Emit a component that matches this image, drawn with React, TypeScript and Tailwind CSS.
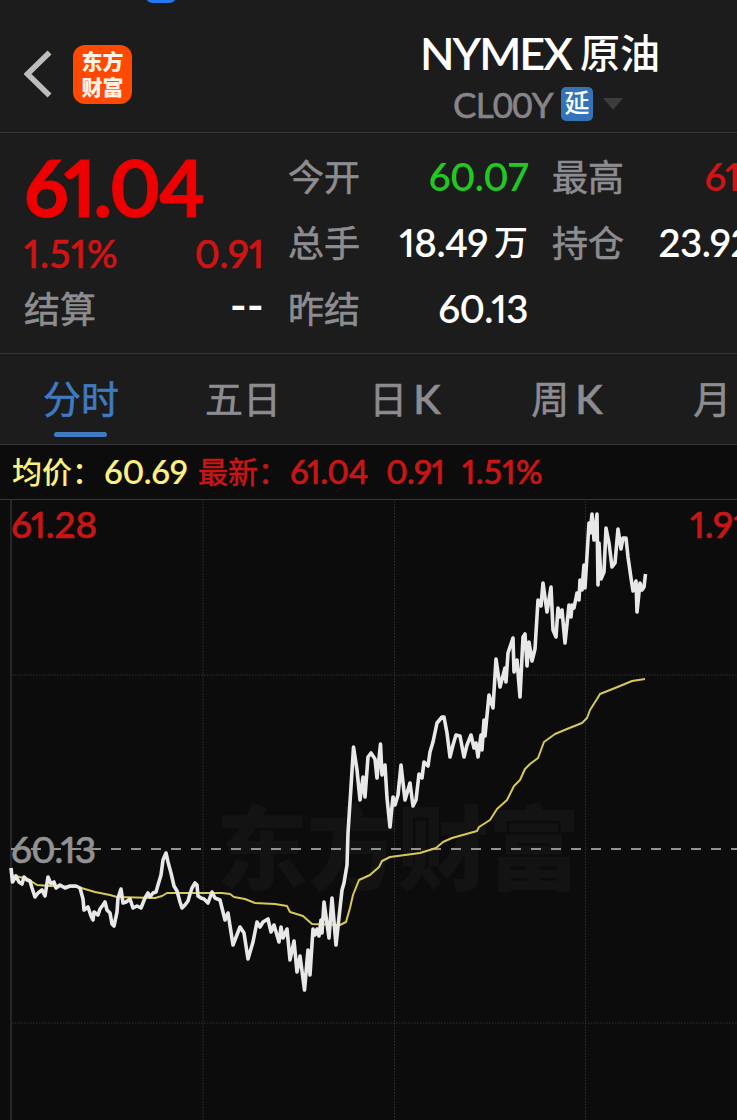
import { clsx } from 'clsx';

type Stat = {
  label: string;
  value: string;
  unit?: string;
  color: string;
};

const stats: Stat[][] = [
  [
    { label: '今开', value: '60.07', color: 'text-[#22c722]' },
    { label: '总手', value: '18.49', unit: '万', color: 'text-white' },
    { label: '昨结', value: '60.13', color: 'text-white' },
  ],
  [
    { label: '最高', value: '61.28', color: 'text-[#d01414]' },
    { label: '持仓', value: '23.92', unit: '万', color: 'text-white' },
  ],
];

const tabs = [
  { han: '分时', active: true },
  { han: '五日' },
  { han: '日', latin: 'K' },
  { han: '周', latin: 'K' },
  { han: '月', latin: 'K' },
];

const pricePoints =
  '11,868 12.5,882 16,876 19,882 22,884 24,877 27,880 30,881 32,888 35,897 38,893 42,890 45,896 48,877 51,884 54,882 56,888 60,885 65,888 70,886 76,886 80,888 83,899 84,910 88,907 91,916 93,920 94,912 98,915 100,909 103,905 105,902 107,910 110,913 112,924 114,926 117,912 118,898 121,889 123,903 126,902 130,899 133,908 137,906 141,908 145,898 148,893 150,897 153,893 156,892 158,885 161,875 163,860 166,853 168,862 171,873 174,886 177,891 180,902 182,908 185,905 188,901 190,894 192,888 195,883 197,885 198,896 201,898 204,899 208,903 212,892 215,898 220,900 225,920 228,913 233,945 240,927 244,933 248,959 253,942 257,922 260,927 263,922 268,919 271,932 274,925 279,942 281,927 283,938 287,929 290,960 294,941 297,972 300,956 304.5,990 308,950 310,975 313,929 315,935 317,929 319,936 321,920 322,933 324,902 329,938 332,898 336,945 342,890 344,883 347,865 348,833 351,787 353.5,747 357,770 360,800 363,777 365,797 368,757 371,753 375,759 377,778 380.5,744 382,775 385,765 387,798 390,827 393,797 395,805 398,795 401,765 405,800 410,783 413,806 416,800 419,774 422,778 424,762 428,766 430,752 433,742 437,723 442,717 444,717 447,733 450,757 453,745 456,735 460,736 464,757 467,745 471,735 474,748 476,743 478,757 481,735 482,750 484,720 485,736 489,695 493,708 496,659 500,687 505,668 506,682 508,653 513,638 514,672 517,660 520,697 523,637 525,634 527,666 529,642 532,661 535,649 538,600 541,606 543,583 547,612 551,587 553,630 556,637 558,608 560,617 562,610 565,643 569,605 571,617 572,605 574,608 577,593 579,600 580,580 582,590 584,565 585,588 589,523 590,533 592,514 594,540 597,514 598,585 599,543 601,579 604,572 606,528 609,543 612,567 615,563 618,529 621,549 623,538 626,538 628,557 631,578 633,591 636,581 637,612 640,583 642,590 644,587 645.5,574';

const averagePoints =
  '11,875 28,879 37,885 50,886 78,887 95,892 110,895 117,897 155,898 162,896 167,893 200,893 222,893 230,894 234,897 245,899 255,903 275,904 287,906 290,912 303,916 312,924 340,925 346,922 350,908 353,895 359,880 370,875 379,867 382,861 390,857 420,853 436,848 443,842 452,838 477,831 479,827 490,820 497,809 507,800 514,786 520,780 525,769 530,764 538,758 544,742 555,734 567,729 582,723 587,718 590,710 597,699 600,694 620,686 632,681 645,679';

const num = "font-['Lato',sans-serif]";
const han = "font-['Noto_Sans_CJK_SC',sans-serif]";
// the regular cuts are a little thin on the dark panels
const firm = '[-webkit-text-stroke:0.6px_currentColor]';

function Header() {
  return (
    <header className="relative h-[133px] border-b border-[#363636]">
      <div className="absolute -top-5 left-[145px] h-[23px] w-8 rounded-lg bg-[#2878ef]" />
      <div className="absolute left-6 top-11 flex items-center gap-[21px]">
        <svg width="28" height="60" viewBox="0 0 28 60" fill="none">
          <path d="M25.500 8.500 3.500 30l22 21.500" stroke="#bdbdbd" strokeWidth="5.500" />
        </svg>
        <div className={clsx(han, 'flex size-[59px] flex-col items-center justify-center rounded-xl bg-[#ff4800] pb-[3px] text-[21px] font-black leading-[26px] text-[#fff3e8]')}>
          <span>东方</span>
          <span>财富</span>
        </div>
      </div>
      <div className="flex flex-col items-center pt-7">
        <h1 className="flex items-center gap-[9px] leading-[50px] text-white">
          <span className={clsx(num, 'text-[45px] font-semibold tracking-[-2px]')}>NYMEX</span>
          <span className={clsx(han, 'pb-1 text-[40px] font-medium leading-[46px]')}>原油</span>
        </h1>
        <div className="mr-1 flex h-[52px] items-center">
          <span className={clsx(num, firm, 'text-[35px] tracking-[-0.8px] text-[#85858a]')}>CL00Y</span>
          <span className={clsx(han, 'ml-2 flex h-[34px] w-8 items-center justify-center rounded-[5px] bg-[#3573b9] pb-1 text-[25px] font-medium text-white')}>
            延
          </span>
          <svg className="ml-[10px]" width="20" height="14" viewBox="0 0 20 14">
            <path d="M0 1h20L10 13z" fill="#3c3c3c" />
          </svg>
        </div>
      </div>
    </header>
  );
}

function StatRow({ label, value, unit, color }: Stat) {
  return (
    <div className="flex h-[66px] items-center justify-between">
      <span className={clsx(han, firm, 'pb-[5px] text-[36px] text-[#8c8c91]')}>{label}</span>
      <span className={clsx('flex items-center font-semibold', color)}>
        <span className={clsx(num, 'text-[38.500px] tracking-[-0.5px] proportional-nums')}>{value}</span>
        {unit && <span className={clsx(han, 'ml-1.5 pb-[5px] text-[34px] font-medium')}>{unit}</span>}
      </span>
    </div>
  );
}

function Quote() {
  return (
    <section className="grid h-[221px] grid-cols-[repeat(4,240px)] gap-6 border-b border-[#363636] px-6 pt-[11px]">
      <div>
        <div className={clsx(num, 'flex h-[86px] items-center text-[78px] font-bold tracking-[-2.500px] text-[#ee0000] [-webkit-text-stroke:1px_currentColor] proportional-nums')}>
          61.04
        </div>
        <div className={clsx(num, firm, 'flex h-[46px] items-center justify-between text-[38px] font-medium text-[#d01414] proportional-nums')}>
          <span className="tracking-[0.8px]">1.51%</span>
          <span>0.91</span>
        </div>
        <div className="flex h-[66px] items-center justify-between">
          <span className={clsx(han, firm, 'pb-[5px] text-[36px] text-[#8c8c91]')}>结算</span>
          <span className={clsx(num, 'pb-2.5 text-[46px] font-semibold text-white')}>--</span>
        </div>
      </div>
      {stats.map((column, i) => (
        <div key={i}>
          {column.map((stat) => (
            <StatRow key={stat.label} {...stat} />
          ))}
        </div>
      ))}
    </section>
  );
}

function Tabs() {
  return (
    <nav className="flex h-[91px] border-b border-[#363636]">
      {tabs.map(({ han: text, latin, active }) => (
        <div
          key={text}
          className={clsx('flex w-[162px] shrink-0 flex-col items-center pt-[18px]', active ? 'text-[#3e7bc0]' : 'text-[#8c8c91]')}
        >
          <span className="flex h-14 items-center gap-1.5">
            <span className={clsx(han, firm, 'pb-[7px] text-[38px]')}>{text}</span>
            {latin && <span className={clsx(num, firm, 'pb-0.5 text-[41px] font-medium')}>{latin}</span>}
          </span>
          {active && <span className="mr-0.5 mt-1 h-[5px] w-[53px] rounded-full bg-[#3e7bc0]" />}
        </div>
      ))}
    </nav>
  );
}

function Legend() {
  return (
    <div className="flex h-[55px] items-center border-b border-[#363636] bg-[#0c0c0c] pl-3">
      <span className={clsx(han, 'w-[92px] whitespace-nowrap pb-1 text-[30px] font-medium text-[#fcf080]')}>均价：</span>
      <span className={clsx(num, 'w-[94px] text-[33px] font-semibold tracking-[-0.3px] text-[#fcf080] proportional-nums')}>60.69</span>
      <span className={clsx(han, firm, 'w-[92px] whitespace-nowrap pb-1 text-[30px] text-[#c81616]')}>最新：</span>
      <span className={clsx(num, firm, 'flex text-[33px] font-medium text-[#c81616] proportional-nums')}>
        <span className="w-[96px] tracking-[-0.4px]">61.04</span>
        <span className="w-[76px] tracking-[-0.5px]">0.91</span>
        <span className="tracking-[0.5px]">1.51%</span>
      </span>
    </div>
  );
}

function Chart() {
  return (
    <section className="relative h-[620px] w-[737px] bg-[#0c0c0c]">
      <svg className="block" width="737" height="620" viewBox="0 500 737 620" fill="none">
        <text x="216" y="883" textLength="364" className={clsx(han, 'text-[92px] font-black')} fill="#131313">
          东方财富
        </text>
        <path d="M11 500V1120" stroke="#262626" strokeWidth="2" />
        <path
          d="M203 501V1120M394.500 501V1120M585.500 501V1120M12 675H737M12 1023H737"
          stroke="#303030"
          strokeDasharray="1.500 1.500"
        />
        <path d="M11 849H737" stroke="#929292" strokeWidth="2" strokeDasharray="10 10" />
        <polyline points={averagePoints} stroke="#d6c957" strokeWidth="2" strokeLinejoin="round" />
        <polyline points={pricePoints} stroke="#e8e8e8" strokeWidth="3.600" strokeLinejoin="round" />
      </svg>
      <span className={clsx(num, firm, 'absolute left-[11px] top-[2px] text-[37px] font-medium leading-[44px] text-[#c81616] proportional-nums')}>61.28</span>
      <span className={clsx(num, firm, 'absolute left-[690px] top-[2px] text-[37px] font-medium leading-[44px] text-[#c81616] proportional-nums')}>
        1.91%
      </span>
      <span className={clsx(num, firm, 'absolute left-[11px] top-[327px] text-[37px] font-medium leading-[44px] tracking-[-0.8px] text-[#929292] proportional-nums')}>60.13</span>
    </section>
  );
}

export default function App() {
  return (
    <div className="h-[1120px] w-[737px] overflow-hidden bg-[#1c1c1c]">
      <div className="w-[1080px]">
        <Header />
        <Quote />
        <Tabs />
        <Legend />
        <Chart />
      </div>
    </div>
  );
}
